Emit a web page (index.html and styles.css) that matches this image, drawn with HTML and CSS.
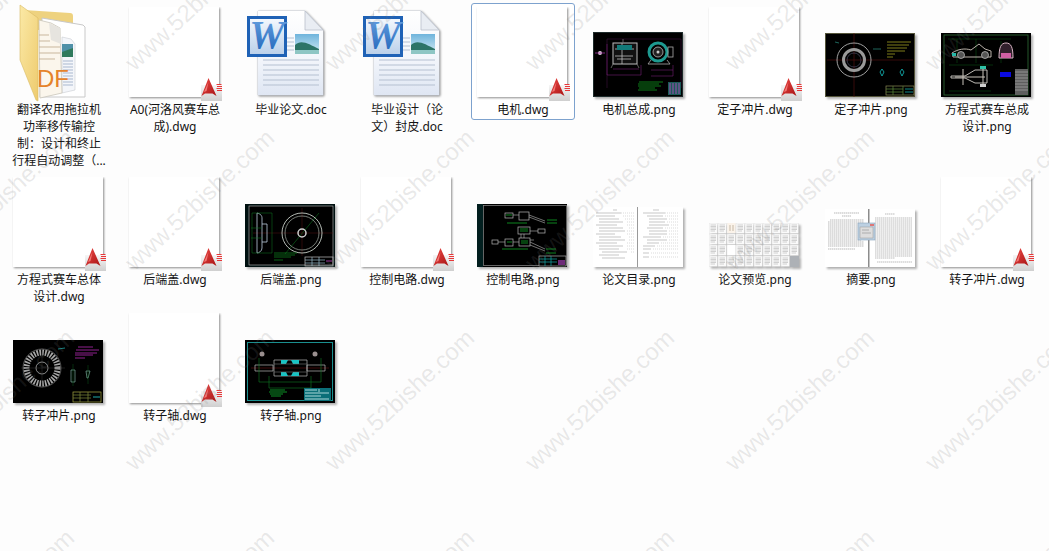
FILE: index.html
```html
<!DOCTYPE html>
<html lang="zh-CN">
<head>
<meta charset="utf-8">
<title>文件夹</title>
<link rel="stylesheet" href="styles.css">
</head>
<body>
<svg class="defs" aria-hidden="true">
  <defs>
    <linearGradient id="paper" x1="0" y1="0" x2="0" y2="1"><stop offset="0" stop-color="#ffffff"/><stop offset=".55" stop-color="#f3f6fb"/><stop offset="1" stop-color="#dfe6f3"/></linearGradient>
    <linearGradient id="wbox" x1="0" y1="0" x2="0" y2="1"><stop offset="0" stop-color="#f5f9fe"/><stop offset="1" stop-color="#b9cfe9"/></linearGradient>
    <linearGradient id="wtext" x1="0" y1="0" x2="0" y2="1"><stop offset="0" stop-color="#6ea6e4"/><stop offset="1" stop-color="#1c62b8"/></linearGradient>
    <linearGradient id="sky" x1="0" y1="0" x2="0" y2="1"><stop offset="0" stop-color="#6fb4dc"/><stop offset="1" stop-color="#d5ecf4"/></linearGradient>
    <linearGradient id="flap" x1="0" y1="0" x2="1" y2="1"><stop offset="0" stop-color="#fbe9a6"/><stop offset="1" stop-color="#eecb6e"/></linearGradient>
    <linearGradient id="panel" x1="0" y1="0" x2="0" y2="1"><stop offset="0" stop-color="#f6f6f6"/><stop offset="1" stop-color="#cfcfcf"/></linearGradient>
    <linearGradient id="acad" x1="0" y1="0" x2="1" y2="1"><stop offset="0" stop-color="#ee4a48"/><stop offset="1" stop-color="#a81414"/></linearGradient>
    <pattern id="mini" width="9" height="11" patternUnits="userSpaceOnUse">
      <rect width="8.4" height="10.4" fill="#fafafa" stroke="#d6d6d6" stroke-width=".4"/>
      <path d="M1.5 2H7M1.5 3.5H7M1.5 5H7M1.5 6.5H7M1.5 8H6" stroke="#b4b4b4" stroke-width=".6"/>
    </pattern>
    <symbol id="dwg" viewBox="0 0 96 94">
      <rect class="sheet" x="2" y="0" width="90" height="90"/>
      <rect x="74" y="78" width="21" height="16" fill="url(#panel)"/>
      <path d="M81.500 71 L89.500 89 L85.500 86.500 L78 86.500 L74.500 89 Z" fill="url(#acad)"/>
      <path d="M81.500 75 L79.500 84 L77 85 Z" fill="#f27a76"/>
      <path d="M89.500 77.500h5M90 79.500h5M89.500 81.500h5.500M90 83.500h5" stroke="#e8383a" stroke-width="1.100"/>
    </symbol>
    <symbol id="wordfile" viewBox="0 0 96 94">
      <path class="sheet" d="M15 4 H62 L80 23 V88 H15 Z" fill="url(#paper)" stroke="#c6ccd6" stroke-width=".8"/>
      <path d="M15 4 H62 L80 23 V88 H15 Z" fill="url(#paper)"/>
      <path d="M62 4 L62 23 H80 Z" fill="#e9edf3" stroke="#b9bfca" stroke-width=".8"/>
      <g stroke="#b5c0d1" stroke-width="1">
        <path d="M44 31H51M44 35H51M44 39H51M44 43H51M20 53H76M20 58H76M20 63H76M20 68H76M20 73H76M20 78H76"/>
      </g>
      <rect x="52" y="27" width="24" height="20" fill="url(#sky)"/>
      <path d="M52 38 C58 32 66 37 76 42 V47 H52 Z" fill="#2c7467"/>
      <path d="M52 43 H76 V47 H52 Z" fill="#8ec6c4"/>
      <rect x="5.500" y="10.500" width="37" height="38" fill="url(#wbox)" stroke="#1f62b6" stroke-width="3"/>
      <text class="wmark" x="24" y="41" text-anchor="middle" fill="url(#wtext)">W</text>
    </symbol>
  </defs>
</svg>

<main class="grid">
  <div class="tile">
    <div class="icon">
      <svg class="full" viewBox="11 7 96 94">
        <path d="M24 10 L70 13 Q73 13 73 16 V30 H24 Z" fill="#eed27f"/>
        <path d="M42 18 L83 25 L85 27 V97 H40 Z" fill="#fff" stroke="#c9c9c9" stroke-width="1"/>
        <path d="M62 37 L71 39 L75 44 V90 L62 93 Z" fill="#f4f6fa" stroke="#c9ccd2" stroke-width=".6"/>
        <rect x="62" y="44" width="11" height="13" fill="#4f90a8"/>
        <path d="M62 52 L73 48 V57 H62 Z" fill="#2f7a5c"/>
        <path d="M63 61H73M63 64H73M63 67H73M63 70H73M63 73H73M63 76H73M63 79H73M63 82H73M63 85H73" stroke="#a9b8cf" stroke-width="1"/>
        <path d="M39 20 L51 23 L60 28 L62 93 L40 98 Z" fill="#fbf6ec" stroke="#c9c5ba" stroke-width=".8"/>
        <path d="M49 23 L51 40 L61 44 L60 28 Z" fill="#e6e4df"/>
        <path d="M39 35H49M39 41H50M39 47H60M39 53H60M39 59H55" stroke="#c9b79d" stroke-width="1"/>
        <text class="pdf" x="37" y="87" fill="#e5832a">DF</text>
        <path d="M20 5 L38 18 V101 L36 100 L20 60 Z" fill="url(#flap)" stroke="#d9bb63" stroke-width=".6"/>
      </svg>
    </div>
    <p class="label">翻译农用拖拉机<br>功率移传输控<br>制<span class="tc">：</span>设计和终止<br>行程自动调整<span class="tc">（</span>...</p>
  </div>

  <div class="tile">
    <div class="icon"><svg class="full"><use href="#dwg"/></svg></div>
    <p class="label">A0(河洛风赛车总<br>成).dwg</p>
  </div>

  <div class="tile">
    <div class="icon"><svg class="full"><use href="#wordfile"/></svg></div>
    <p class="label">毕业论文.doc</p>
  </div>

  <div class="tile">
    <div class="icon"><svg class="full"><use href="#wordfile"/></svg></div>
    <p class="label">毕业设计<span class="tc">（</span>论<br>文<span class="tc">）</span>封皮.doc</p>
  </div>

  <div class="tile selected">
    <div class="icon"><svg class="full"><use href="#dwg"/></svg></div>
    <p class="label">电机.dwg</p>
  </div>

  <div class="tile">
    <div class="icon icon-b">
      <svg class="shot h65" viewBox="0 0 90 65">
        <rect width="90" height="65" fill="#000"/>
        <rect x=".5" y=".5" width="89" height="64" fill="none" stroke="#1d2a2a"/>
        <path d="M14 7H88M14 7V56M88 7V56" stroke="#4a154a" stroke-width=".5" fill="none"/>
        <rect x="20" y="11" width="24" height="21" fill="#111" stroke="#bbb"/>
        <path d="M22 17H41M22 24H40M29 11V32M24 27H38" stroke="#bbb" stroke-width=".8"/>
        <rect x="24" y="13" width="15" height="5" fill="#127a78"/>
        <path d="M30 7V11M20 32L18 36M44 32L46 36" stroke="#777" stroke-width=".8"/>
        <circle cx="7" cy="21" r="2" fill="#d9c8d9"/>
        <path d="M2 21H12" stroke="#a0329f" stroke-width=".8"/>
        <path d="M14 12V43H48V33M58 44H80V33M20 37H46M58 38H80" stroke="#8a248a" stroke-width=".5" fill="none"/>
        <circle cx="65" cy="20" r="9" fill="none" stroke="#1d9a90" stroke-width="3"/>
        <circle cx="65" cy="20" r="5" fill="#222" stroke="#bbb" stroke-width=".8"/>
        <circle cx="65" cy="20" r="1.500" fill="#ccc"/>
        <rect x="75" y="15" width="5" height="10" fill="none" stroke="#aaa" stroke-width=".8"/>
        <path d="M55 32H77M58 28L55 32M74 28L77 32" stroke="#aaa" stroke-width=".8"/>
        <path d="M46 50H70M45 52H66M45 54H68M46 56H62M45 58H64" stroke="#0e8a1c" stroke-width=".9"/>
        <rect x="75" y="50" width="13" height="13" fill="#1b5b58"/>
        <path d="M77 51V62M80 51V62M83 51V62M86 51V62" stroke="#a04fb0" stroke-width="1"/>
      </svg>
    </div>
    <p class="label">电机总成.png</p>
  </div>

  <div class="tile">
    <div class="icon"><svg class="full"><use href="#dwg"/></svg></div>
    <p class="label">定子冲片.dwg</p>
  </div>

  <div class="tile">
    <div class="icon icon-b">
      <svg class="shot h64" viewBox="0 0 90 64">
        <rect width="90" height="64" fill="#000"/>
        <rect x=".5" y=".5" width="89" height="63" fill="none" stroke="#54543a"/>
        <path d="M29 0V64M2 27H88" stroke="#5a1010" stroke-width=".6"/>
        <circle cx="29" cy="27" r="17" fill="none" stroke="#c8c8c8" stroke-width=".8"/>
        <circle cx="29" cy="27" r="10.500" fill="none" stroke="#9a9a9a" stroke-width="3"/>
        <circle cx="29" cy="27" r="7" fill="none" stroke="#668" stroke-width=".5"/>
        <path d="M14 10L10 9M48 16H56" stroke="#3a9" stroke-width=".6"/>
        <path d="M62 9H86M62 12H84M62 15H82M62 18H80M62 21H70M62 24H68" stroke="#8d8a1d" stroke-width=".9"/>
        <path d="M57 36L59 39L57 43L55 39ZM77 36L79 39L77 43L75 39Z" fill="none" stroke="#1aa" stroke-width=".9"/>
        <rect x="61" y="53" width="28" height="9" fill="none" stroke="#8b8b55" stroke-width=".7"/>
        <path d="M61 56H78M61 59H78M68 53V62M78 53V62" stroke="#5d8a3a" stroke-width=".7"/>
        <path d="M80 56H88M80 59H88" stroke="#1aa" stroke-width=".8"/>
      </svg>
    </div>
    <p class="label">定子冲片.png</p>
  </div>

  <div class="tile">
    <div class="icon icon-b">
      <svg class="shot h64" viewBox="0 0 90 64">
        <rect width="90" height="64" fill="#000"/>
        <rect x="3" y="2" width="84" height="60" fill="none" stroke="#2e6b35" stroke-width=".8"/>
        <path d="M7 6H70M16 30V6M35 30V6M60 30V8" stroke="#0b5a14" stroke-width=".5"/>
        <path d="M11 20 C17 16 24 15 30 17 L38 11 L44 16 L50 18 L50 24 L12 24 Z" fill="none" stroke="#cfc6bd" stroke-width=".9"/>
        <circle cx="20" cy="22" r="3.500" fill="#555" stroke="#ccc" stroke-width=".7"/>
        <circle cx="44" cy="22" r="3.500" fill="#555" stroke="#ccc" stroke-width=".7"/>
        <rect x="11" y="20" width="4" height="3" fill="#25b8a8"/>
        <path d="M58 25 C58 14 60 10 65 10 C70 10 72 14 72 25 Z" fill="#31202c" stroke="#d8b6c4" stroke-width="1"/>
        <rect x="60" y="20" width="10" height="5" fill="#d05fa4"/>
        <path d="M10 43 H24 L34 37 H46 V50 H34 L24 45 H10 Z" fill="none" stroke="#d2cfc8" stroke-width=".9"/>
        <path d="M14 44 H44M22 36V52M42 33V54" stroke="#c9c4bb" stroke-width="1"/>
        <rect x="39" y="33" width="6" height="3" fill="#2ec2a7"/>
        <rect x="39" y="51" width="6" height="3" fill="#cfcfcf"/>
        <path d="M8 58H50M8 32H52" stroke="#0b5a14" stroke-width=".5"/>
        <rect x="59" y="39" width="11" height="5" fill="#0a0ae0"/>
        <rect x="74" y="36" width="13" height="26" fill="#5e5e5e"/>
        <path d="M74 39H87M74 42H87M74 45H87M74 48H87M74 51H87M74 54H87M74 57H87" stroke="#a9a9a9" stroke-width=".7"/>
      </svg>
    </div>
    <p class="label">方程式赛车总成<br>设计.png</p>
  </div>

  <div class="tile">
    <div class="icon"><svg class="full"><use href="#dwg"/></svg></div>
    <p class="label">方程式赛车总体<br>设计.dwg</p>
  </div>

  <div class="tile">
    <div class="icon"><svg class="full"><use href="#dwg"/></svg></div>
    <p class="label">后端盖.dwg</p>
  </div>

  <div class="tile">
    <div class="icon icon-b">
      <svg class="shot h63" viewBox="0 0 90 63">
        <rect width="90" height="63" fill="#001010"/>
        <rect x="4" y="2" width="84" height="59" fill="#000" stroke="#bdbdbd" stroke-width=".6"/>
        <path d="M8 29H88M57 4V52" stroke="#561010" stroke-width=".5"/>
        <path d="M40 50L74 9" stroke="#0c6f1e" stroke-width=".6"/>
        <circle cx="57" cy="29" r="20" fill="none" stroke="#c8d0c8" stroke-width=".9"/>
        <circle cx="57" cy="29" r="17" fill="none" stroke="#a8b0a8" stroke-width=".7"/>
        <circle cx="57" cy="29" r="4" fill="none" stroke="#cfcfcf" stroke-width="1.500"/>
        <path d="M12 9 C16 10 17 12 17 14 V44 C17 47 14 49 12 49 V9M17 20H22V38H17" fill="none" stroke="#bcd" stroke-width=".8"/>
        <path d="M7 9H27V49H7ZM6 24H17M6 34H17" fill="none" stroke="#0c7a22" stroke-width=".5"/>
        <path d="M29 49H52M29 51H50M29 53H46M29 56H38" stroke="#0f8a1f" stroke-width=".7"/>
        <rect x="60" y="53" width="28" height="9" fill="none" stroke="#bcbcbc" stroke-width=".7"/>
        <path d="M60 56H80M60 59H80M67 53V62M74 53V62" stroke="#9bc" stroke-width=".7"/>
        <path d="M81 57H87" stroke="#a03aa0" stroke-width="1"/>
      </svg>
    </div>
    <p class="label">后端盖.png</p>
  </div>

  <div class="tile">
    <div class="icon"><svg class="full"><use href="#dwg"/></svg></div>
    <p class="label">控制电路.dwg</p>
  </div>

  <div class="tile">
    <div class="icon icon-b">
      <svg class="shot h63" viewBox="0 0 90 63">
        <rect width="90" height="63" fill="#000"/>
        <rect width="6" height="63" fill="#021f1f"/>
        <rect x="6.500" y="1.500" width="83" height="60" fill="none" stroke="#8f8f8f" stroke-width=".7"/>
        <g fill="#000" stroke="#b5b5b5" stroke-width=".7">
          <rect x="28" y="9" width="8" height="5"/><rect x="42" y="8" width="10" height="8"/>
          <rect x="41" y="23" width="12" height="7"/><rect x="61" y="25" width="7" height="4"/>
          <rect x="15" y="36" width="6" height="4"/><rect x="28" y="35" width="8" height="7"/>
          <rect x="42" y="34" width="11" height="8"/>
        </g>
        <path d="M36 11H42M52 11L68 17M52 13L68 19M53 27H61M47 30V34M44 30V34M21 38H28M36 38H42M53 36H57M53 38L68 45M53 41L68 47" fill="none" stroke="#b9b9b9" stroke-width=".6"/>
        <path d="M30 19H50M70 16H80M70 19H80M43 25H51M43 27H51M44 37H51M44 39H51M25 45H51M69 45H79M69 49H79M29 11H35M30 38H35" stroke="#10a626" stroke-width=".8"/>
        <rect x="62" y="52" width="27" height="10" fill="#000" stroke="#aaa" stroke-width=".7"/>
        <path d="M62 55H80M62 58H80M68 52V62M74 52V62" stroke="#1aa" stroke-width=".7"/>
        <rect x="81" y="56" width="7" height="5" fill="#6d2a78"/>
      </svg>
    </div>
    <p class="label">控制电路.png</p>
  </div>

  <div class="tile">
    <div class="icon icon-b">
      <svg class="shot h60" viewBox="0 0 90 60">
        <rect width="90" height="60" fill="#fff"/>
        <rect x="44" width="1" height="60" fill="#9a9a9a"/>
        <path d="M20 3H24M3 6H28M3 9H22M6 12H26M6 15H30M3 18H24M6 21H30M6 24H32M3 27H22M6 30H28M6 33H32M3 36H24M6 39H30M6 42H26M9 45H34M6 48H26M9 51H32" stroke="#8c8c8c" stroke-width=".5"/>
        <path d="M28 6H42M30 9H42M32 12H42M34 15H42M34 18H42M36 21H42M34 24H42M34 27H42M36 30H42M36 33H42M34 36H42M34 39H42M34 42H42M38 45H42" stroke="#b4b4b4" stroke-width=".5" stroke-dasharray="1 1"/>
        <path d="M60 3H66M50 6H72M54 9H70M56 12H74M56 15H72M56 18H76M54 21H70M56 24H74M56 27H74M50 30H68M54 33H74M54 36H66M50 39H62M50 42H58M50 46H56M50 50H56" stroke="#8c8c8c" stroke-width=".5"/>
        <path d="M72 6H86M72 9H86M76 12H86M74 15H86M78 18H86M72 21H86M76 24H86M76 27H86M70 30H86M76 33H86M68 36H86M64 39H86M60 42H86M58 46H86M58 50H86" stroke="#b4b4b4" stroke-width=".5" stroke-dasharray="1 1"/>
      </svg>
    </div>
    <p class="label">论文目录.png</p>
  </div>

  <div class="tile">
    <div class="icon icon-b">
      <svg class="shot h44" viewBox="0 0 90 44">
        <rect width="90" height="44" fill="url(#mini)"/>
        <rect x="18.500" y="0" width="8" height="10" fill="#fbf3ea"/>
        <path d="M21 2V8M24 2V8" stroke="#b9a896" stroke-width=".8"/>
        <rect x="18.500" y="22" width="8" height="10" fill="#fff"/>
        <rect x="81" y="33" width="9" height="11" fill="#adb1b6"/>
      </svg>
    </div>
    <p class="label">论文预览.png</p>
  </div>

  <div class="tile">
    <div class="icon icon-b">
      <svg class="shot h58" viewBox="0 0 90 58">
        <rect width="90" height="58" fill="#fff"/>
        <rect x="43" width="1.500" height="58" fill="#8c8c8c"/>
        <path d="M9 4H34M17 7H26M5 11H39M3 13H39M3 15H39M3 17H39M3 19H39M3 21H39M3 23H39M3 25H39M3 27H39M3 29H39M3 31H36M3 33H39M3 35H39M3 37H39M3 40H30" stroke="#8c8c8c" stroke-width=".6" stroke-dasharray="1.500 .5"/>
        <path d="M60 5H70M50 9H87M50 11H87M50 13H87M50 15H87M50 17H87M50 19H87M50 21H87M50 23H87M50 25H87M50 27H87M50 29H87M50 31H87M50 33H87M50 35H87M50 37H87M50 39H87M50 41H87M50 43H87M50 45H87M50 47H87M50 49H70M52 53H87" stroke="#929292" stroke-width=".6" stroke-dasharray="1.500 .5"/>
        <rect x="33" y="14" width="17" height="17" fill="#bcd0e2" stroke="#8aa3bb" stroke-width=".6"/>
        <rect x="35" y="18" width="13" height="11" fill="#ddd" stroke="#999" stroke-width=".5"/>
        <rect x="45" y="15" width="4" height="2" fill="#d77"/>
        <path d="M37 21H44M37 24H46" stroke="#999" stroke-width=".7"/>
      </svg>
    </div>
    <p class="label">摘要.png</p>
  </div>

  <div class="tile">
    <div class="icon"><svg class="full"><use href="#dwg"/></svg></div>
    <p class="label">转子冲片.dwg</p>
  </div>

  <div class="tile">
    <div class="icon icon-b">
      <svg class="shot h63" viewBox="0 0 90 63">
        <rect width="90" height="63" fill="#000"/>
        <circle cx="29" cy="28" r="15.500" fill="none" stroke="#a8a8a8" stroke-width="6" stroke-dasharray="1.600 1.200"/>
        <circle cx="29" cy="28" r="19" fill="none" stroke="#8a8a8a" stroke-width=".6"/>
        <circle cx="29" cy="28" r="6" fill="none" stroke="#c4c4c4" stroke-width=".7"/>
        <path d="M29 8V48M8 28H52" stroke="#444" stroke-width=".4"/>
        <path d="M45 9L52 8" stroke="#2bb" stroke-width=".7"/>
        <path d="M65 7H80M63 10H86M62 13H84M62 15H80M62 18H72" stroke="#a0249f" stroke-width=".9"/>
        <path d="M58 30H62V42H58ZM73 31H77L75 38H74Z" fill="none" stroke="#7a9" stroke-width=".7"/>
        <path d="M60 24V46M75 25V44" stroke="#0d6d22" stroke-width=".4"/>
        <rect x="60" y="52" width="28" height="10" fill="none" stroke="#a6a642" stroke-width=".7"/>
        <path d="M60 55H78M60 58H78M67 52V62M75 52V62" stroke="#808a3a" stroke-width=".7"/>
        <path d="M80 57H87" stroke="#2bb" stroke-width=".9"/>
      </svg>
    </div>
    <p class="label">转子冲片.png</p>
  </div>

  <div class="tile">
    <div class="icon"><svg class="full"><use href="#dwg"/></svg></div>
    <p class="label">转子轴.dwg</p>
  </div>

  <div class="tile">
    <div class="icon icon-b">
      <svg class="shot h63" viewBox="0 0 90 63">
        <rect width="90" height="63" fill="#000"/>
        <rect x="2.500" y="2.500" width="85" height="58" fill="none" stroke="#1a8f8f"/>
        <circle cx="17" cy="14" r="2.500" fill="#9a8f8f"/>
        <circle cx="70" cy="14" r="2.500" fill="#9a8f8f"/>
        <path d="M6 28H84" stroke="#6a1010" stroke-width=".6"/>
        <path d="M10 25H28V31H10ZM62 25H80V31H62ZM29 20H62V36H29Z" fill="none" stroke="#b4b4b4" stroke-width=".7"/>
        <path d="M36 20 H43 L41 24 H36ZM46 20H54V24H48ZM36 32H41L43 36H36ZM48 32H54V36H46Z" fill="#19c2c2"/>
        <path d="M29 24H62M29 32H62" stroke="#777" stroke-width=".6"/>
        <path d="M14 18V42H76V18M24 36V48H66V36" fill="none" stroke="#0e7a22" stroke-width=".6"/>
        <path d="M25 50H40M24 52H42M25 54H38M26 56H36" stroke="#0fa32a" stroke-width=".9"/>
        <rect x="59" y="48" width="27" height="13" fill="#0b6f78"/>
        <path d="M60 50H72M60 53H84M60 56H76M60 59H84M74 49V52" stroke="#d5f2f2" stroke-width=".8"/>
      </svg>
    </div>
    <p class="label">转子轴.png</p>
  </div>
</main>

<div class="watermarks" aria-hidden="true">
  <div class="marks">
    <span class="mark"><b>www.52bishe.com</b></span><span class="mark"><b>www.52bishe.com</b></span><span class="mark"><b>www.52bishe.com</b></span><span class="mark"><b>www.52bishe.com</b></span><span class="mark"><b>www.52bishe.com</b></span><span class="mark"><b>www.52bishe.com</b></span>
    <span class="mark"><b>www.52bishe.com</b></span><span class="mark"><b>www.52bishe.com</b></span><span class="mark"><b>www.52bishe.com</b></span><span class="mark"><b>www.52bishe.com</b></span><span class="mark"><b>www.52bishe.com</b></span><span class="mark"><b>www.52bishe.com</b></span>
    <span class="mark"><b>www.52bishe.com</b></span><span class="mark"><b>www.52bishe.com</b></span><span class="mark"><b>www.52bishe.com</b></span><span class="mark"><b>www.52bishe.com</b></span><span class="mark"><b>www.52bishe.com</b></span><span class="mark"><b>www.52bishe.com</b></span>
    <span class="mark"><b>www.52bishe.com</b></span><span class="mark"><b>www.52bishe.com</b></span><span class="mark"><b>www.52bishe.com</b></span><span class="mark"><b>www.52bishe.com</b></span><span class="mark"><b>www.52bishe.com</b></span><span class="mark"><b>www.52bishe.com</b></span>
  </div>
</div>
</body>
</html>
```
FILE: styles.css
```css
* { box-sizing: border-box; }

html, body {
  margin: 0;
  height: 100%;
  overflow: hidden;
  background: #fdfdfd;
}

body {
  position: relative;
  font-family: "Noto Sans", "Noto Sans CJK SC", sans-serif;
  font-size: 12px;
  line-height: 17px;
  color: #141414;
}

.defs {
  display: block;
  width: 0;
  height: 0;
}

.grid {
  display: grid;
  grid-template-columns: repeat(9, 104px);
  column-gap: 12px;
  row-gap: 2px;
  align-items: start;
  padding: 3px 0 0 7px;
}

.tile {
  border: 1px solid transparent;
  border-radius: 3px;
  padding-top: 3px;
  padding-bottom: 1px;
}

.tile.selected {
  border-color: #7da2ce;
  background: #ffffff;
}

.icon {
  height: 94px;
  display: flex;
  justify-content: center;
  align-items: flex-start;
}

.icon-b {
  align-items: flex-end;
  padding-bottom: 4px;
}

.full {
  display: block;
  width: 96px;
  height: 94px;
  overflow: visible;
}

.shot {
  display: block;
  width: 90px;
  margin-left: -1px;
  margin-right: 1px;
  filter: blur(.4px) drop-shadow(2px 2px 1px rgba(0, 0, 0, .3));
}

.h65 { height: 65px; }
.h64 { height: 64px; }
.h63 { height: 63px; }
.h60 { height: 60px; }
.h58 { height: 58px; }
.h44 { height: 44px; }

.sheet {
  fill: #ffffff;
  filter: drop-shadow(1.5px 1.5px 1px rgba(0, 0, 0, .45));
}

.wmark {
  font-family: "Liberation Serif", serif;
  font-size: 40px;
  font-weight: 700;
  font-style: italic;
}

.pdf {
  font-family: "Liberation Sans", sans-serif;
  font-size: 24px;
}

.label {
  margin: 0;
  text-align: center;
  white-space: nowrap;
}

.tc {
  font-family: "Noto Sans CJK TC", sans-serif;
  line-height: 0;
}

.watermarks {
  position: absolute;
  inset: 0;
  overflow: hidden;
  pointer-events: none;
}

.marks {
  display: grid;
  grid-template-columns: repeat(6, 200px);
  grid-auto-rows: 200px;
  margin: -100px 0 0 -100px;
}

.mark {
  display: flex;
  align-items: center;
  justify-content: center;
}

.mark b {
  font-family: "Liberation Sans", sans-serif;
  font-size: 24px;
  font-weight: 400;
  line-height: 28px;
  white-space: nowrap;
  color: rgba(120, 120, 120, .17);
  transform: rotate(-43deg);
}
```
